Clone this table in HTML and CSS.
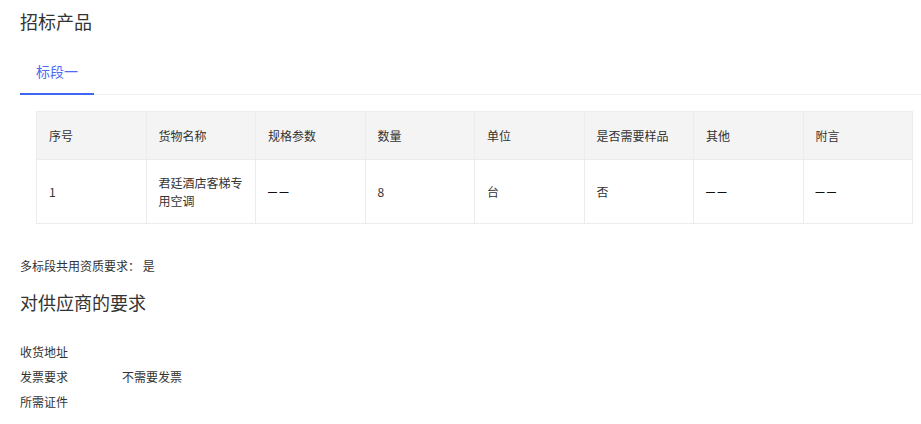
FILE: index.html
```html
<!DOCTYPE html>
<html>
<head>
  <meta charset="UTF-8">
  <title>招标产品</title>
  <link rel="stylesheet" href="styles.css">
</head>
<body>
<div class="page">
  <h2 class="title">招标产品</h2>
  <div class="tabs">
    <a href="javascript:;" class="tab active">标段一</a>
  </div>
  <table class="goods">
    <thead>
      <tr>
        <th>序号</th>
        <th>货物名称</th>
        <th>规格参数</th>
        <th>数量</th>
        <th>单位</th>
        <th>是否需要样品</th>
        <th>其他</th>
        <th>附言</th>
      </tr>
    </thead>
    <tbody>
      <tr>
        <td>1</td>
        <td>君廷酒店客梯专用空调</td>
        <td><span class="dash">— —</span></td>
        <td>8</td>
        <td>台</td>
        <td>否</td>
        <td><span class="dash">— —</span></td>
        <td><span class="dash">— —</span></td>
      </tr>
    </tbody>
  </table>
  <p class="share">多标段共用资质要求：&nbsp;是</p>
  <h2 class="title sub">对供应商的要求</h2>
  <ul class="reqs">
    <li><span class="label">收货地址</span><span></span></li>
    <li><span class="label">发票要求</span><span>不需要发票</span></li>
    <li><span class="label">所需证件</span><span></span></li>
  </ul>
</div>
</body>
</html>
```

FILE: styles.css
```css
* {
  margin: 0;
  padding: 0;
}
body {
  font-family: "Microsoft YaHei", "Noto Sans CJK SC", sans-serif;
  color: #333;
  font-size: 12px;
  background: #fff;
}
.page {
  padding: 8px 0 0 20px;
}
.title {
  font-size: 18px;
  font-weight: normal;
  line-height: 26px;
  color: #333;
}
.tabs {
  margin-top: 17px;
  display: flex;
  border-bottom: 1px solid #eee;
}
.tab {
  padding: 0 16px;
  height: 42px;
  line-height: 40px;
  font-size: 14px;
  color: #4b6cf0;
  text-decoration: none;
  border-bottom: 2px solid #3f66f2;
  margin-bottom: -1px;
}
.goods {
  margin: 16px 8px 0 16px;
  width: calc(100% - 24px);
  border-collapse: collapse;
  table-layout: fixed;
}
.goods th, .goods td {
  border: 1px solid #ececec;
  text-align: left;
  padding: 0 12px;
  font-weight: normal;
  line-height: 18px;
}
.goods th {
  background: #f4f4f4;
  height: 47px;
}
.goods td {
  height: 63px;
}
.dash {
  font-family: "Liberation Sans", sans-serif;
  font-size: 9px;
  font-weight: bold;
  color: #111;
  vertical-align: 2px;
}
.share {
  margin-top: 33px;
  line-height: 18px;
}
.sub {
  margin-top: 14px;
}
.reqs {
  list-style: none;
  margin-top: 28px;
}
.reqs li {
  display: flex;
  line-height: 18px;
  margin-bottom: 7px;
}
.reqs .label {
  width: 102px;
}
```
